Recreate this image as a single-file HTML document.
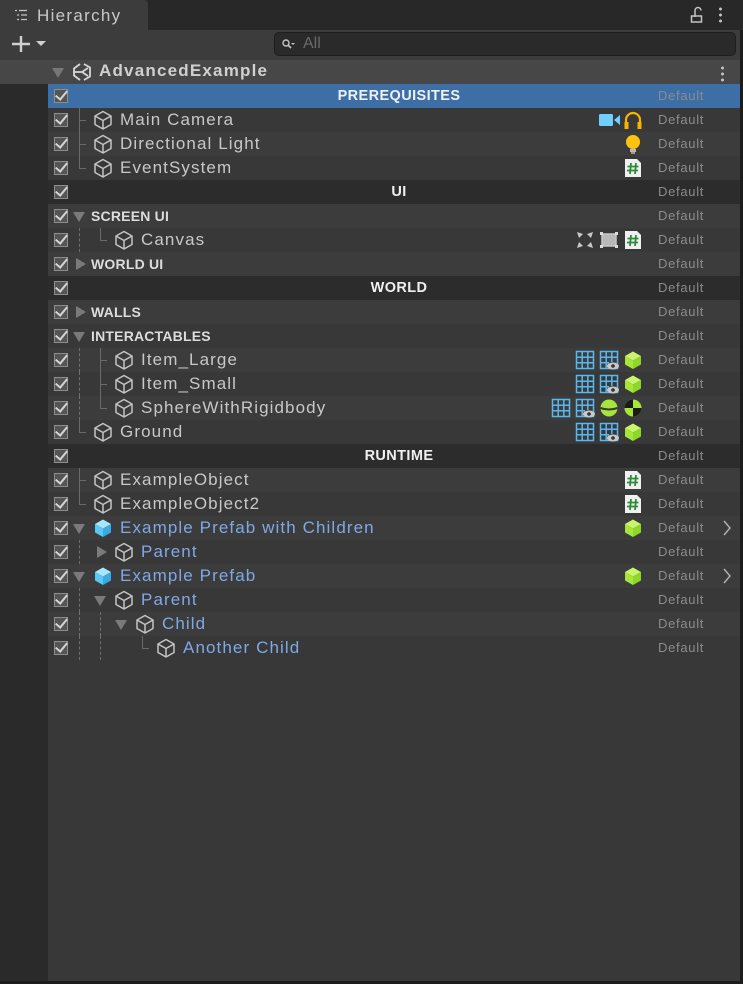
<!DOCTYPE html>
<html><head><meta charset="utf-8"><style>
*{margin:0;padding:0;box-sizing:border-box}
body{width:743px;height:984px;background:#232323;font-family:"Liberation Sans",sans-serif;position:relative;overflow:hidden}
.abs{position:absolute}
.row{position:absolute;left:48px;width:692px;height:24px}
.row>*{position:absolute}
.l{background:#3c3c3c}.d{background:#383838}.h{background:#2c2c2c}.sel{background:#3e6ea6}
.cb{left:6px;top:5px;width:14px;height:14px;border:1px solid #8e8e8e;background:#555}
.cb::after{content:"";position:absolute;left:3px;top:-2px;width:5px;height:10px;border-right:2px solid #d4d4d4;border-bottom:2px solid #d4d4d4;transform:rotate(40deg)}
.nm{top:2px;font-size:17px;color:#c8c8c8;line-height:20px;white-space:nowrap;letter-spacing:1.1px}
.bl{color:#7fa9e6}
.grp{top:4px;font-size:14px;font-weight:bold;color:#dcdcdc;line-height:16px;letter-spacing:.2px}
.hd{left:0;width:692px;text-align:center;top:4px;font-size:14.5px;font-weight:bold;color:#f0f0f0;line-height:16px;letter-spacing:.4px;padding-left:10px}
.df{left:610px;top:5px;font-size:13px;color:#8c8c8c;line-height:14px;letter-spacing:.7px}
.vd{width:0;border-left:1px dashed #707070;top:0;height:24px}
.vs{width:1px;background:#6a6a6a;top:0;height:24px}
.hs{height:1px;background:#6a6a6a;top:12px}
.tri{width:0;height:0}
.td{border-left:6px solid transparent;border-right:6px solid transparent;border-top:10px solid #7a7a7a;top:8px}
.tr{border-top:6px solid transparent;border-bottom:6px solid transparent;border-left:10px solid #7a7a7a;top:6px}
.ic{top:2px}
</style></head><body>
<svg width="0" height="0" style="position:absolute"><defs>
<symbol id="cube" viewBox="0 0 20 20"><path d="M10 1.5 L18 6 V14.5 L10 19 L2 14.5 V6 Z M2 6 L10 10.5 L18 6 M10 10.5 V19" fill="none" stroke="#c4c4c4" stroke-width="1.5" stroke-linejoin="round"/></symbol>
<symbol id="bcube" viewBox="0 0 20 20"><path d="M10 1.5 L18 6 L10 10.5 L2 6Z" fill="#a6e6ff"/><path d="M2 6 L10 10.5 V19 L2 14.5Z" fill="#59c8f5"/><path d="M18 6 L10 10.5 V19 L18 14.5Z" fill="#39a9e0"/></symbol>
<symbol id="gcube" viewBox="0 0 20 20"><path d="M10 1.5 L18 6 L10 10.5 L2 6Z" fill="#c9f56c"/><path d="M2 6 L10 10.5 V19 L2 14.5Z" fill="#a6e63a"/><path d="M18 6 L10 10.5 V19 L18 14.5Z" fill="#8fd62a"/></symbol>
<symbol id="grid" viewBox="0 0 20 20"><path d="M1.5 1.5H18.5V18.5H1.5Z M7.2 1.5V18.5 M12.8 1.5V18.5 M1.5 7.2H18.5 M1.5 12.8H18.5" fill="none" stroke="#5ab8f0" stroke-width="1.5"/></symbol>
<symbol id="gridv" viewBox="0 0 20 20"><path d="M1.5 1.5H18.5V18.5H1.5Z M7.2 1.5V18.5 M12.8 1.5V12 M1.5 7.2H18.5 M1.5 12.8H10" fill="none" stroke="#5ab8f0" stroke-width="1.5"/><ellipse cx="14" cy="16" rx="6" ry="3.5" fill="#c8c8c8"/><circle cx="14" cy="16" r="1.8" fill="#333"/></symbol>
<symbol id="hash" viewBox="0 0 20 20"><path d="M2 1H14L18 5V19H2Z" fill="#f0f0f0"/><path d="M8 5L7 16M13 5L12 16M4.5 8.5H15.5M4 12.5H15" stroke="#2e8b3a" stroke-width="1.8"/></symbol>
</defs></svg>

<!-- tab bar -->
<div class="abs" style="left:0;top:0;width:743px;height:30px;background:#282828"></div>
<div class="abs" style="left:0;top:0;width:148px;height:30px;background:#3c3c3c;border-top-right-radius:4px"></div>
<svg class="abs" style="left:14px;top:9px" width="14" height="12"><path d="M1 1.5h2M5 1.5h8M3 6h2M7 6h6M3 10.5h2M7 10.5h6" stroke="#c4c4c4" stroke-width="1.3"/></svg>
<div class="abs" style="left:37px;top:6px;font-size:17px;color:#c8c8c8;letter-spacing:1.3px">Hierarchy</div>
<svg class="abs" style="left:690px;top:5px" width="14" height="18"><path d="M5 12V5.5a3 3 0 0 1 6 0" fill="none" stroke="#c4c4c4" stroke-width="1.5"/><rect x="1.5" y="11" width="10" height="6" fill="none" stroke="#c4c4c4" stroke-width="1.5"/></svg>
<div class="abs" style="left:719px;top:6px;width:3px;height:17px;background:radial-gradient(circle,#c4c4c4 1.3px,transparent 1.6px) 0 0/3px 6px"></div>
<!-- toolbar -->
<div class="abs" style="left:0;top:30px;width:743px;height:30px;background:#3c3c3c"></div>
<svg class="abs" style="left:11px;top:35px" width="38" height="18"><path d="M10 1V17M1 9H19" stroke="#d0d0d0" stroke-width="2.4"/><path d="M25 6H35L30 11Z" fill="#d0d0d0"/></svg>
<div class="abs" style="left:274px;top:32px;width:462px;height:24px;background:#2a2a2a;border:1px solid #1e1e1e;border-radius:5px"></div>
<svg class="abs" style="left:281px;top:38px" width="14" height="12"><circle cx="5" cy="5" r="3" fill="none" stroke="#c4c4c4" stroke-width="1.4"/><path d="M7 7L10 10" stroke="#c4c4c4" stroke-width="1.6"/><path d="M10 5H14L12 7Z" fill="#c4c4c4"/></svg>
<div class="abs" style="left:303px;top:35px;font-size:16px;color:#6a6a6a">All</div>
<!-- left gutter / body -->
<div class="abs" style="left:0;top:60px;width:48px;height:921px;background:#2a2a2a"></div>
<div class="abs" style="left:48px;top:60px;width:692px;height:921px;background:#383838"></div>
<div class="abs" style="left:740px;top:30px;width:3px;height:954px;background:#1c1c1c"></div>
<div class="abs" style="left:0;top:981px;width:743px;height:3px;background:#1c1c1c"></div>
<!-- scene row -->
<div class="abs" style="left:0;top:60px;width:740px;height:24px;background:#474747"></div>
<div class="abs tri td" style="left:52px;top:68px;border-top-color:#777"></div>
<svg class="abs" style="left:71px;top:62px" width="22" height="20" viewBox="0 0 22 20"><path d="M13 2L19 5.5V14.5L13 18M9 18L3 13.5V6.5L9 2" fill="none" stroke="#d8d8d8" stroke-width="1.8"/><path d="M3 10H11L17 6M11 10L17 14" fill="none" stroke="#d8d8d8" stroke-width="1.8"/></svg>
<div class="abs" style="left:99px;top:61px;font-size:17px;font-weight:bold;color:#d0d0d0;letter-spacing:1.2px">AdvancedExample</div>
<div class="abs" style="left:721px;top:65px;width:3px;height:17px;background:radial-gradient(circle,#c4c4c4 1.3px,transparent 1.6px) 0 0/3px 6px"></div>

<!-- rows -->
<div class="row sel" style="top:84px"><div class="cb"></div><div class="hd">PREREQUISITES</div><div class="df">Default</div></div>

<div class="row d" style="top:108px"><div class="cb"></div><div class="vs" style="left:31px"></div><div class="hs" style="left:31px;width:7px"></div><svg class="ic" style="left:45px" width="20" height="20"><use href="#cube"/></svg><div class="nm" style="left:72px">Main Camera</div>
<svg class="ic" style="left:551px;top:4px" width="22" height="16"><rect x="0" y="2" width="14" height="12" rx="1.5" fill="#6fd0ff"/><path d="M15 8L21 3V13Z" fill="#6fd0ff"/></svg>
<svg class="ic" style="left:575px" width="20" height="20"><path d="M3 14V10a7 7 0 0 1 14 0V14" fill="none" stroke="#f5b400" stroke-width="2.2"/><rect x="1.5" y="12" width="4" height="7" fill="#f5b400"/><rect x="14.5" y="12" width="4" height="7" fill="#f5b400"/></svg>
<div class="df">Default</div></div>

<div class="row l" style="top:132px"><div class="cb"></div><div class="vs" style="left:31px"></div><div class="hs" style="left:31px;width:7px"></div><svg class="ic" style="left:45px" width="20" height="20"><use href="#cube"/></svg><div class="nm" style="left:72px">Directional Light</div>
<svg class="ic" style="left:575px" width="20" height="22"><circle cx="10" cy="8" r="7" fill="#ffc20e"/><rect x="7" y="15" width="6" height="3" fill="#bbb"/><rect x="8" y="18" width="4" height="2" fill="#999"/></svg>
<div class="df">Default</div></div>

<div class="row d" style="top:156px"><div class="cb"></div><div class="vs" style="left:31px;height:12px"></div><div class="hs" style="left:31px;width:7px"></div><svg class="ic" style="left:45px" width="20" height="20"><use href="#cube"/></svg><div class="nm" style="left:72px">EventSystem</div>
<svg class="ic" style="left:575px" width="20" height="20"><use href="#hash"/></svg><div class="df">Default</div></div>

<div class="row h" style="top:180px"><div class="cb"></div><div class="hd">UI</div><div class="df">Default</div></div>

<div class="row l" style="top:204px"><div class="cb"></div><div class="tri td" style="left:25px"></div><div class="grp" style="left:43px">SCREEN UI</div><div class="df">Default</div></div>

<div class="row d" style="top:228px"><div class="cb"></div><div class="vd" style="left:31px"></div><div class="vs" style="left:52px;height:12px"></div><div class="hs" style="left:52px;width:7px"></div><svg class="ic" style="left:66px" width="20" height="20"><use href="#cube"/></svg><div class="nm" style="left:93px">Canvas</div>
<svg class="ic" style="left:527px" width="20" height="20"><path d="M2 2L8 4L4 8Z M18 2L12 4L16 8Z M2 18L8 16L4 12Z M18 18L12 16L16 12Z" fill="#c8c8c8"/></svg>
<svg class="ic" style="left:551px" width="20" height="20"><rect x="3" y="4" width="14" height="12" fill="#b8b8b8" stroke="#c8c8c8" stroke-width="1.5"/><rect x="1" y="2" width="3" height="3" fill="#ddd"/><rect x="16" y="2" width="3" height="3" fill="#ddd"/><rect x="1" y="15" width="3" height="3" fill="#ddd"/><rect x="16" y="15" width="3" height="3" fill="#ddd"/></svg>
<svg class="ic" style="left:575px" width="20" height="20"><use href="#hash"/></svg><div class="df">Default</div></div>

<div class="row l" style="top:252px"><div class="cb"></div><div class="tri tr" style="left:28px"></div><div class="grp" style="left:43px">WORLD UI</div><div class="df">Default</div></div>

<div class="row h" style="top:276px"><div class="cb"></div><div class="hd">WORLD</div><div class="df">Default</div></div>

<div class="row l" style="top:300px"><div class="cb"></div><div class="tri tr" style="left:28px"></div><div class="grp" style="left:43px">WALLS</div><div class="df">Default</div></div>

<div class="row d" style="top:324px"><div class="cb"></div><div class="tri td" style="left:25px"></div><div class="grp" style="left:43px">INTERACTABLES</div><div class="df">Default</div></div>

<div class="row l" style="top:348px"><div class="cb"></div><div class="vd" style="left:31px"></div><div class="vs" style="left:52px"></div><div class="hs" style="left:52px;width:7px"></div><svg class="ic" style="left:66px" width="20" height="20"><use href="#cube"/></svg><div class="nm" style="left:93px">Item_Large</div>
<svg class="ic" style="left:527px" width="20" height="20"><use href="#grid"/></svg><svg class="ic" style="left:551px" width="20" height="20"><use href="#gridv"/></svg><svg class="ic" style="left:575px" width="20" height="20"><use href="#gcube"/></svg><div class="df">Default</div></div>

<div class="row d" style="top:372px"><div class="cb"></div><div class="vd" style="left:31px"></div><div class="vs" style="left:52px"></div><div class="hs" style="left:52px;width:7px"></div><svg class="ic" style="left:66px" width="20" height="20"><use href="#cube"/></svg><div class="nm" style="left:93px">Item_Small</div>
<svg class="ic" style="left:527px" width="20" height="20"><use href="#grid"/></svg><svg class="ic" style="left:551px" width="20" height="20"><use href="#gridv"/></svg><svg class="ic" style="left:575px" width="20" height="20"><use href="#gcube"/></svg><div class="df">Default</div></div>

<div class="row l" style="top:396px"><div class="cb"></div><div class="vd" style="left:31px"></div><div class="vs" style="left:52px;height:12px"></div><div class="hs" style="left:52px;width:7px"></div><svg class="ic" style="left:66px" width="20" height="20"><use href="#cube"/></svg><div class="nm" style="left:93px">SphereWithRigidbody</div>
<svg class="ic" style="left:503px" width="20" height="20"><use href="#grid"/></svg><svg class="ic" style="left:527px" width="20" height="20"><use href="#gridv"/></svg>
<svg class="ic" style="left:551px" width="20" height="20"><circle cx="10" cy="10" r="8.5" fill="#a6e63a"/><path d="M1.5 10Q10 13 18.5 10" stroke="#383838" stroke-width="2" fill="none"/></svg>
<svg class="ic" style="left:575px" width="20" height="20"><circle cx="10" cy="10" r="8.5" fill="#a6e63a"/><path d="M10 10V1.5A8.5 8.5 0 0 0 1.5 10Z M10 10V18.5A8.5 8.5 0 0 0 18.5 10Z" fill="#1a1a1a"/></svg><div class="df">Default</div></div>

<div class="row d" style="top:420px"><div class="cb"></div><div class="vs" style="left:31px;height:12px"></div><div class="hs" style="left:31px;width:7px"></div><svg class="ic" style="left:45px" width="20" height="20"><use href="#cube"/></svg><div class="nm" style="left:72px">Ground</div>
<svg class="ic" style="left:527px" width="20" height="20"><use href="#grid"/></svg><svg class="ic" style="left:551px" width="20" height="20"><use href="#gridv"/></svg><svg class="ic" style="left:575px" width="20" height="20"><use href="#gcube"/></svg><div class="df">Default</div></div>

<div class="row h" style="top:444px"><div class="cb"></div><div class="hd">RUNTIME</div><div class="df">Default</div></div>

<div class="row l" style="top:468px"><div class="cb"></div><div class="vs" style="left:31px"></div><div class="hs" style="left:31px;width:7px"></div><svg class="ic" style="left:45px" width="20" height="20"><use href="#cube"/></svg><div class="nm" style="left:72px">ExampleObject</div><svg class="ic" style="left:575px" width="20" height="20"><use href="#hash"/></svg><div class="df">Default</div></div>

<div class="row d" style="top:492px"><div class="cb"></div><div class="vs" style="left:31px;height:12px"></div><div class="hs" style="left:31px;width:7px"></div><svg class="ic" style="left:45px" width="20" height="20"><use href="#cube"/></svg><div class="nm" style="left:72px">ExampleObject2</div><svg class="ic" style="left:575px" width="20" height="20"><use href="#hash"/></svg><div class="df">Default</div></div>

<div class="row l" style="top:516px"><div class="cb"></div><div class="tri td" style="left:25px"></div><svg class="ic" style="left:45px" width="20" height="20"><use href="#bcube"/></svg><div class="nm bl" style="left:72px">Example Prefab with Children</div><svg class="ic" style="left:575px" width="20" height="20"><use href="#gcube"/></svg><div class="df">Default</div>
<svg style="left:674px;top:4px" width="10" height="16"><path d="M2 1L8 8L2 15" fill="none" stroke="#b0b0b0" stroke-width="1.5"/></svg></div>

<div class="row d" style="top:540px"><div class="cb"></div><div class="vd" style="left:31px"></div><div class="tri tr" style="left:49px"></div><svg class="ic" style="left:66px" width="20" height="20"><use href="#cube"/></svg><div class="nm bl" style="left:93px">Parent</div><div class="df">Default</div></div>

<div class="row l" style="top:564px"><div class="cb"></div><div class="tri td" style="left:25px"></div><svg class="ic" style="left:45px" width="20" height="20"><use href="#bcube"/></svg><div class="nm bl" style="left:72px">Example Prefab</div><svg class="ic" style="left:575px" width="20" height="20"><use href="#gcube"/></svg><div class="df">Default</div>
<svg style="left:674px;top:4px" width="10" height="16"><path d="M2 1L8 8L2 15" fill="none" stroke="#b0b0b0" stroke-width="1.5"/></svg></div>

<div class="row d" style="top:588px"><div class="cb"></div><div class="vd" style="left:31px"></div><div class="tri td" style="left:46px"></div><svg class="ic" style="left:66px" width="20" height="20"><use href="#cube"/></svg><div class="nm bl" style="left:93px">Parent</div><div class="df">Default</div></div>

<div class="row l" style="top:612px"><div class="cb"></div><div class="vd" style="left:31px"></div><div class="vd" style="left:52px"></div><div class="tri td" style="left:67px"></div><svg class="ic" style="left:87px" width="20" height="20"><use href="#cube"/></svg><div class="nm bl" style="left:114px">Child</div><div class="df">Default</div></div>

<div class="row d" style="top:636px"><div class="cb"></div><div class="vd" style="left:31px"></div><div class="vd" style="left:52px"></div><div class="vs" style="left:94px;height:12px"></div><div class="hs" style="left:94px;width:7px"></div><svg class="ic" style="left:108px" width="20" height="20"><use href="#cube"/></svg><div class="nm bl" style="left:135px">Another Child</div><div class="df">Default</div></div>
</body></html>
